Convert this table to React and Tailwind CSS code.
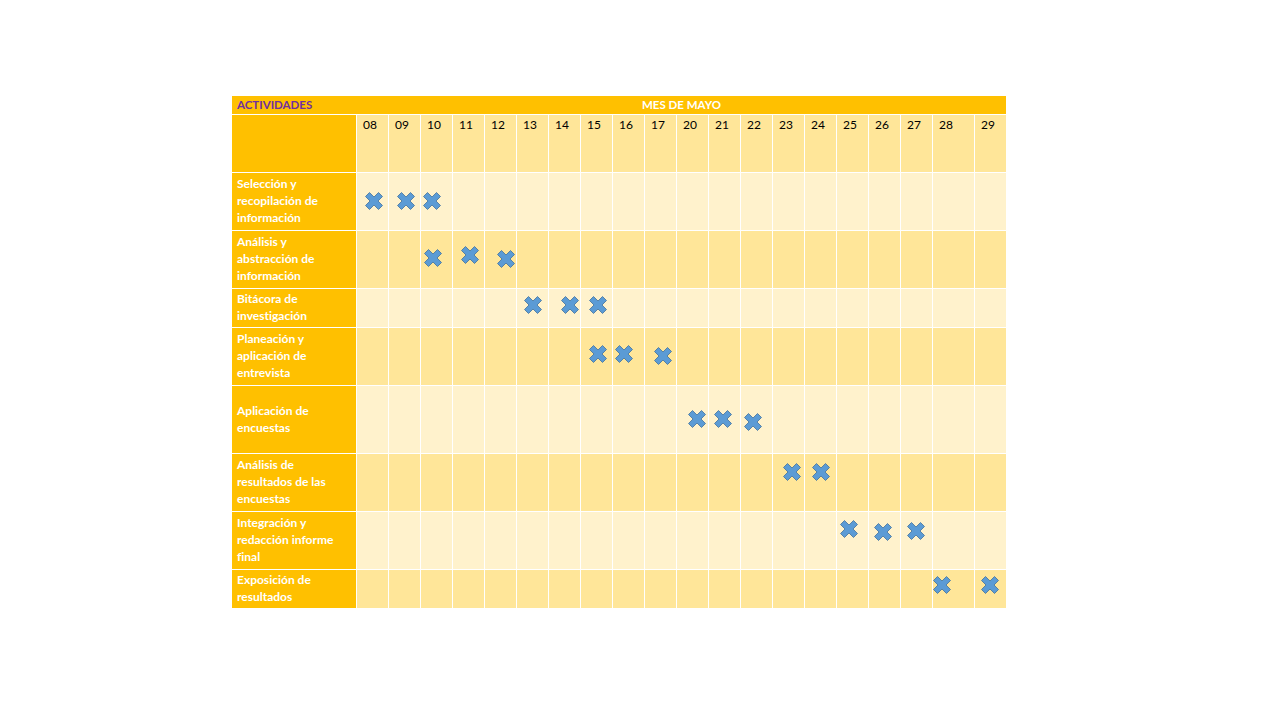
const days = ["08", "09", "10", "11", "12", "13", "14", "15", "16", "17", "20", "21", "22", "23", "24", "25", "26", "27", "28", "29"];

const rows = [
  { label: ["Selección y", "recopilación de", "información"], h: "h-[57px]", light: true },
  { label: ["Análisis y", "abstracción de", "información"], h: "h-[57px]", light: false },
  { label: ["Bitácora de", "investigación"], h: "h-[38px]", light: true },
  { label: ["Planeación y", "aplicación de", "entrevista"], h: "h-[57px]", light: false },
  { label: ["Aplicación de", "encuestas"], h: "h-[67px]", light: true },
  { label: ["Análisis de", "resultados de las", "encuestas"], h: "h-[57px]", light: false },
  { label: ["Integración y", "redacción informe", "final"], h: "h-[57px]", light: true },
  { label: ["Exposición de", "resultados"], h: "h-[38px]", light: false },
];

// centres of the X shapes, page coords
const marks = [
  [374, 201], [406, 201], [432, 201],
  [433, 258], [470, 255], [506, 259],
  [533, 305], [570, 305], [598, 305],
  [598, 354], [624, 354], [663, 356],
  [697, 419], [723, 419], [753, 422],
  [792, 472], [821, 472],
  [849, 529], [883, 532], [916, 531],
  [942, 585], [990, 585],
];

function Cross({ x, y }) {
  return (
    <svg
      className="absolute"
      style={{ left: x - 232 - 11, top: y - 96 - 11 }}
      width="22"
      height="22"
      viewBox="0 0 22 22"
    >
      <polygon
        points="2.5,6.5 6.5,2.5 11,7 15.5,2.5 19.5,6.5 15,11 19.5,15.5 15.5,19.5 11,15 6.5,19.5 2.5,15.5 7,11"
        fill="#5B9BD5"
        stroke="#41719C"
        strokeWidth="0.8"
        strokeLinejoin="round"
      />
    </svg>
  );
}

export default function App() {
  return (
    <div className="min-h-screen w-full bg-white pt-[96px] pl-[232px] font-['Lato',sans-serif] [font-variant-ligatures:none]">
      <div className="relative w-[774px]">
        {/* top header bar */}
        <div className="flex h-[18px] bg-[#FFC000] text-[11.5px] font-bold leading-[18px]">
          <div className="w-[125px] pl-[5px] text-[#7030A0]">ACTIVIDADES</div>
          <div className="flex-1 text-center text-white">MES DE MAYO</div>
        </div>

        <div className="mt-px grid grid-cols-[124px_repeat(18,31px)_41px_31px] gap-px bg-white">
          <div className="h-[57px] bg-[#FFC000]"></div>
          {days.map((d) => (
            <div key={d} className="h-[57px] bg-[#FFE699] pl-[6px] pt-px text-[12px] leading-[17px] text-black">
              {d}
            </div>
          ))}

          {rows.map((r, i) => (
            <div key={i} className="contents">
              <div className={`${r.h} flex flex-col justify-center bg-[#FFC000] pb-[2px] pl-[5px] text-[12px] font-bold leading-[17px] text-white`}>
                {r.label.map((l) => (
                  <span key={l}>{l}</span>
                ))}
              </div>
              {days.map((d) => (
                <div key={d} className={`${r.h} ${r.light ? "bg-[#FFF2CC]" : "bg-[#FFE699]"}`}></div>
              ))}
            </div>
          ))}
        </div>

        {marks.map(([x, y], i) => (
          <Cross key={i} x={x} y={y} />
        ))}
      </div>
    </div>
  );
}
